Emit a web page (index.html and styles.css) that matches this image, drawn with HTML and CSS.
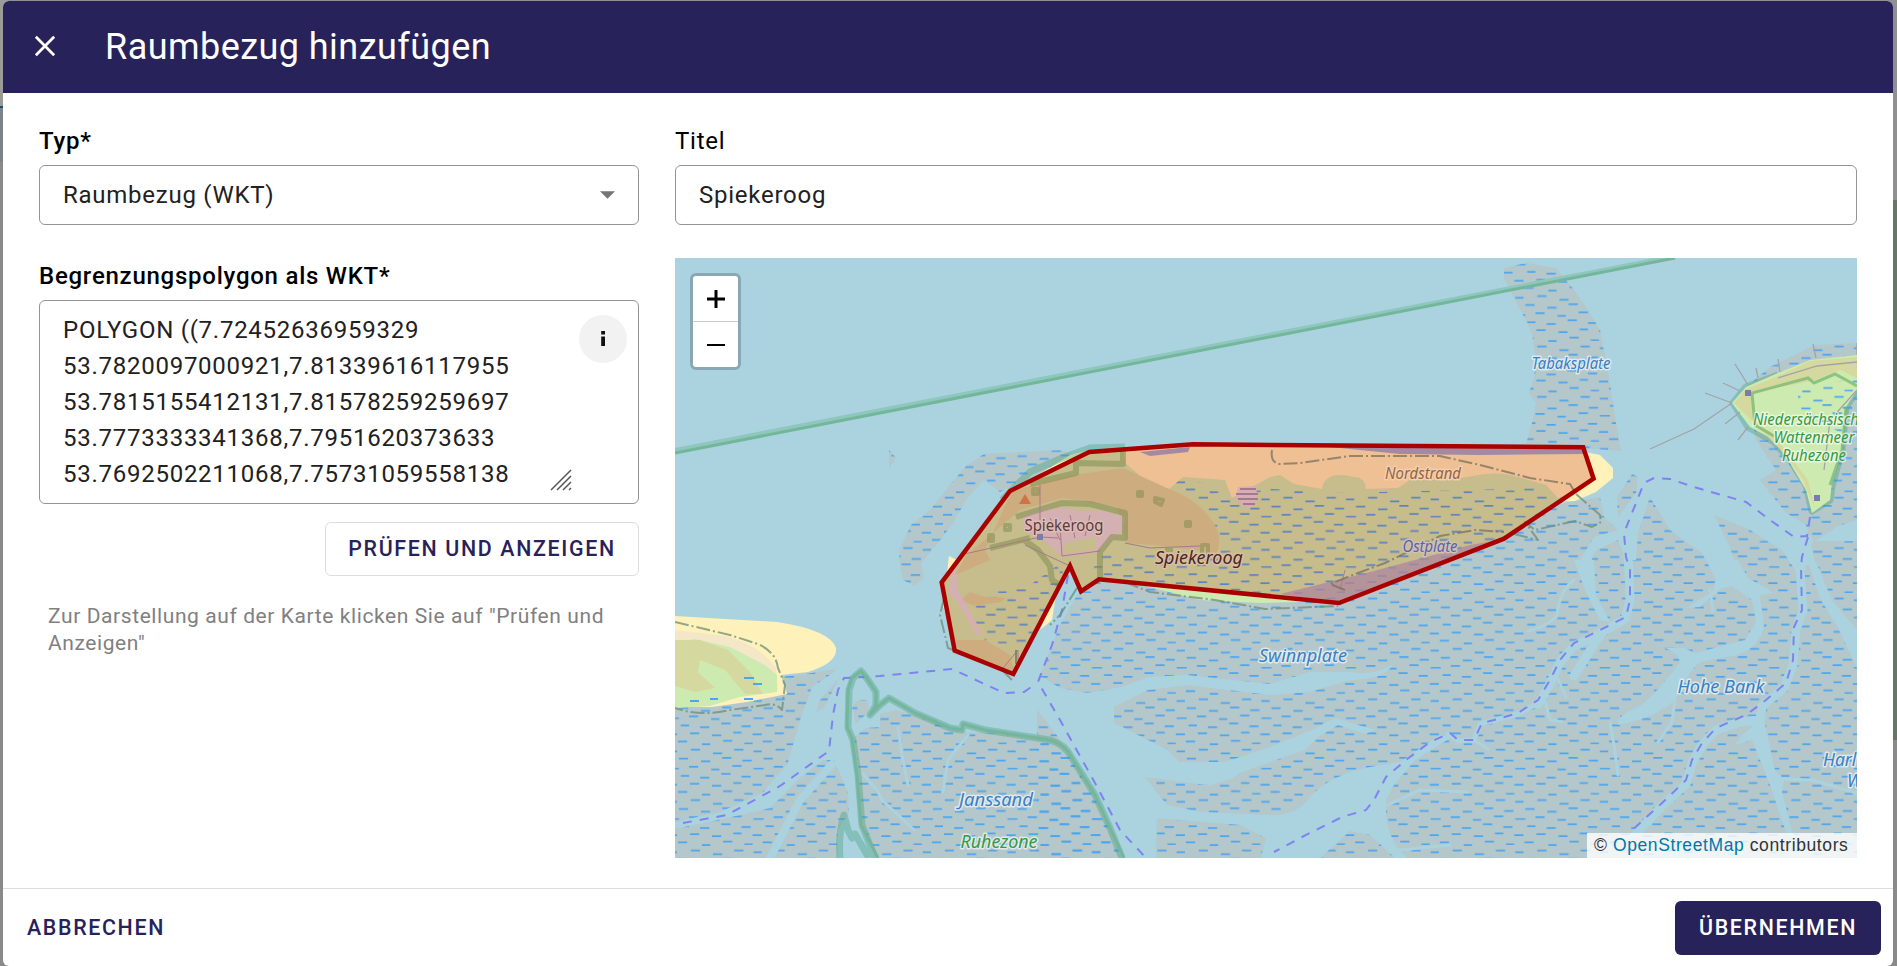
FILE: index.html
```html
<!DOCTYPE html>
<html lang="de">
<head>
<meta charset="utf-8">
<title>Raumbezug hinzufügen</title>
<link rel="stylesheet" href="styles.css">
</head>
<body>
<div class="backdrop left-edge"></div>
<div class="backdrop right-edge"></div>
<div class="dialog">
  <header class="dialog-header">
    <svg class="close" viewBox="0 0 24 24"><path d="M2 2L22 22M22 2L2 22"/></svg>
    <h1 class="dialog-title">Raumbezug hinzufügen</h1>
  </header>
  <main class="content">
    <section class="left">
      <div class="label strong">Typ*</div>
      <div class="field select"><span>Raumbezug (WKT)</span><svg class="arrow" viewBox="0 0 16 8"><path d="M0 0H16L8 8Z"/></svg></div>
      <div class="label strong second">Begrenzungspolygon als WKT*</div>
      <div class="field area">
        <div class="wkt">POLYGON ((7.72452636959329<br>53.7820097000921,7.81339616117955<br>53.7815155412131,7.81578259259697<br>53.7773333341368,7.7951620373633<br>53.7692502211068,7.75731059558138</div>
        <div class="side">
          <svg class="info" viewBox="0 0 48 48"><circle cx="24" cy="24" r="24"/><path d="M22.2 16h3.8v3.6h-3.8zM22.2 21.6h3.8v9.4h-3.8z"/></svg>
        </div>
        <svg class="grip" viewBox="0 0 22 22"><path d="M1 21L21 1M7 21L21 7M13 21L21 13M19 21L21 19"/></svg>
      </div>
      <button class="check">PRÜFEN UND ANZEIGEN</button>
      <p class="hint">Zur Darstellung auf der Karte klicken Sie auf "Prüfen und Anzeigen"</p>
    </section>
    <section class="right">
      <div class="label plain">Titel</div>
      <div class="field">Spiekeroog</div>
      <div class="map">
        <svg class="map-canvas" viewBox="675 258 1182 600">
          <defs>
            <pattern id="dash" width="92" height="56" patternUnits="userSpaceOnUse" patternTransform="scale(.92 .9)">
              <path class="reeds" d="M2 3h10M26 6h10M49 2h10M71 5h10M13 12h10M37 15h9M60 11h10M83 14h9M0 14h2M4 22h9M25 24h10M48 20h10M70 23h10M14 31h10M38 33h10M61 30h9M82 32h10M1 40h10M27 43h9M50 39h10M73 42h9M15 49h10M39 53h10M62 49h10M83 51h9"/>
            </pattern>
            <clipPath id="isl"><path d="M1010 491L1089 452L1193 444L1583 447L1594 479L1504 539L1339 603L1099 579L1081 591L1070 566L1013 674L955 651L942 582Z"/></clipPath>
            <g id="flats">
              <path d="M1504 268L1526 263L1556 268L1574 290L1590 313L1600 330L1605 357L1610 383L1615 417L1621 451L1526 444L1532 423L1536 403L1529 393L1534 377L1536 360L1532 333L1522 313L1510 290L1504 278Z"/>
              <path d="M984 454L1060 450L1080 456L1026 480L1000 492L984 480L968 497L953 523L938 543L921 563L924 577L915 586L903 580L899 560L900 548L911 525L930 510L950 485L966 466Z"/>
              <path d="M889 450L896 458L889 468Z"/>
              <path d="M675 704L780 677L806 674L840 668L812 687L800 720L785 773L762 793L720 812L675 822Z"/>
              <path d="M675 829L727 818L770 808L800 778L823 760L834 760L848 793L849 813L838 830L838 858H675Z"/>
              <path d="M832 675L842 672L824 708L815 713L816 700Z"/>
              <path d="M852 707Q858 697 868 701L869 711L856 724Z"/>
              <path d="M854 737L866 728L880 727L880 714L896 710L915 715L961 732L1003 733L1053 740L1068 753L1091 787L1106 820L1122 858H880L861 827L859 773Z"/>
              <path d="M1080 590L1099 579L1339 603L1504 539L1556 505L1600 497L1604 517L1618 530L1594 537L1580 560L1585 575L1596 550L1618 540L1626 560L1636 560L1638 533L1650 497L1670 530L1702 553L1714 572L1738 572L1730 547L1714 515L1750 530L1782 550L1795 570L1815 562L1857 562V858H1037V683L1060 625Z"/>
              <path d="M1632 474L1638 477L1636 493L1618 517L1617 497Z"/>
              <path d="M1746 387L1770 367L1815 345L1857 343V520L1838 526L1815 541H1857V562H1815L1806 525L1786 513L1760 480L1776 470L1756 440Z"/>
            </g>
          </defs>
          <rect class="water" x="675" y="258" width="1182" height="600"/>
          <use class="flat" href="#flats"/>
          <use class="reedfill" href="#flats"/>
          <!-- tidal channels -->
          <path class="water" d="M1030 675L1044 678L1060 688L1087 693L1122 687L1148 677L1187 675L1270 684L1310 672L1350 672Q1375 676 1393 664Q1385 680 1350 680L1310 692L1270 695L1187 685L1148 690L1114 707V723L1168 750L1179 762H1225L1270 747L1314 729L1335 718L1375 730L1365 734L1338 725L1318 737L1305 750L1270 762L1240 773L1225 780L1206 785L1145 777L1167 805L1200 812L1270 815Q1296 816 1310 797Q1330 775 1370 767L1400 762L1440 735L1452 737L1415 760L1394 785L1386 800L1386 815Q1390 845 1408 858H1395L1370 835L1350 831L1320 858H1261L1266 838L1240 825L1157 818L1156 858H1122L1091 787L1068 750L1030 700Z"/>
          <path class="water" d="M1225 770L1245 770L1233 778L1206 787Z"/>
          <path class="water" d="M1706 560L1738 560L1748 578L1774 593L1760 595L1764 625Q1762 645 1738 655L1700 662Q1688 672 1675 700Q1655 718 1618 725Q1615 716 1640 706Q1660 690 1680 662Q1678 652 1665 648L1684 648L1695 653L1745 640L1756 622L1752 600L1732 586L1722 588L1700 607L1686 608L1712 592L1716 580Z"/>
          <path class="water" d="M1574 560H1594L1596 595L1610 622L1600 620L1585 590Z"/>
          <path class="water" d="M1808 562H1816L1832 600L1857 630V668L1838 628L1820 598Z"/>
          <path class="water" d="M1758 722L1764 720L1775 770L1784 780L1782 792L1792 832L1808 858L1786 832L1770 785L1752 740L1735 745L1742 735Z"/>
          <g class="creek">
            <path stroke-width="9" d="M1650 484L1640 500L1626 535L1629 570L1630 600L1625 619L1606 630L1574 646L1560 662L1550 684L1538 704"/>
            <path stroke-width="5" d="M1540 702L1518 714L1480 724L1474 740L1458 741L1448 734"/>
            <path stroke-width="9" d="M1600 635L1574 676M1808 540L1800 570L1803 610L1796 630L1793 665L1784 688L1762 706L1760 720L1740 722L1716 730L1702 745L1692 763L1686 784L1662 806L1634 836"/>
            <path stroke-width="3" d="M1574 580Q1560 590 1557 615Q1550 625 1528 631M1545 700L1550 720L1562 722M1556 675L1566 697M1610 722L1614 745L1618 775M1675 700L1672 722L1658 742M1388 805L1420 790L1468 792M1400 850L1450 845M1780 779L1812 780L1857 793M898 728L902 755L908 785M968 735L948 760L943 792M862 773L877 790L882 800L914 830M1710 590L1713 612M1474 740L1488 749"/>
            <path stroke-width="8" d="M832 764L800 800L770 858M842 668L815 700L805 750L770 790"/>
          </g>
          <!-- shipping routes -->
          <g class="route">
            <path d="M683 823L727 815L780 786L829 751L833 715L838 690L844 678L880 676L952 669L1004 693L1024 692L1037 683"/>
            <path d="M1068 575L1062 610L1052 645L1038 682L1060 720L1095 783L1120 830L1146 858"/>
            <path d="M1810 517L1807 536L1794 537L1770 520L1746 502L1694 487L1670 479L1654 478L1644 483L1636 503L1624 533L1626 557L1630 570V600L1626 617L1606 627L1574 643L1560 660L1550 680L1538 700L1518 713L1494 720L1482 723L1474 740L1458 740L1450 733L1430 742L1406 760L1386 777L1374 800L1366 810L1342 817L1302 837L1274 852"/>
            <path d="M1808 537L1802 557L1801 567L1802 610L1794 627L1793 660L1786 683L1766 700L1746 715L1716 728L1702 743L1692 760L1686 780L1662 803L1630 832"/>
          </g>
          <!-- national park boundary -->
          <path class="park-soft" d="M675 450L1670 257"/><path class="park-line" d="M675 453L1675 258"/>
          <path class="park-band" d="M875 858L862 825L858 775L853 740L848 728L849 690L853 678L861 671L868 680L876 692L876 705L870 715L880 705L889 698L915 713L950 728L962 730L963 724L985 730L1050 740Q1065 744 1072 758L1095 795L1110 828L1122 858M840 858Q838 835 844 815L848 830L852 838L855 834L869 858"/>
          <path class="park-core" d="M878 858L861 825L857 775L852 738L847 727L848 690L852 678L861 671L868 680L876 692L876 705L870 715L880 705L889 698L915 713L950 728L962 730L963 724L985 730L1050 740Q1065 744 1072 758L1095 795L1110 828L1124 858"/>
          <!-- western island -->
          <path class="sand" d="M675 616L777 622Q830 630 836 648Q838 663 808 672L781 675L786 690L787 694L747 702L712 707H675Z"/>
          <path class="beach" d="M675 630L725 636Q760 645 776 668L778 690L675 700Z"/>
          <path class="grass" d="M675 642L695 639L730 647L765 665L777 675V692L740 697L710 706L675 708Z"/>
          <path class="scrub" d="M675 640L700 640L728 650L750 672L763 694H745L725 670L700 660L698 672L715 688L695 692L675 686Z"/>
          <path class="bound" d="M675 622L730 635L758 644Q776 652 778 668L785 685L782 710Q775 702 765 705L730 710Q700 717 675 708"/>
          <path class="reedlines" d="M744 678h10M753 684h9M690 701h9M710 699h8M744 699h9"/>
          <!-- eastern island -->
          <path class="park-band" d="M1857 390L1846 407L1842 450L1832 486L1830 500L1812 511L1806 485L1790 460L1774 442L1748 427L1733 403L1746 387L1778 375"/>
          <path class="grass" d="M1732 403L1746 387L1778 373L1810 360L1857 355V390L1846 407L1842 450L1832 483L1830 500L1812 513L1806 490L1790 463L1774 440L1750 427Z"/>
          <path class="scrub" d="M1734 403L1746 389L1778 376L1810 361L1857 357V378L1840 370L1815 380L1752 393L1754 420L1775 436L1808 480L1815 508L1803 480L1786 455Z"/>
          <path class="reedfill" d="M1798 388L1857 378V400L1846 435L1798 412Z"/>
          <path class="park-line thin" d="M1857 386L1835 374L1814 383L1808 378L1752 393L1755 425L1774 436M1846 407L1842 450L1830 485"/>
          <g class="groyne"><path d="M1732 403L1705 393M1732 403L1694 429L1650 449M1748 385L1735 364M1740 391L1723 383M1758 378L1756 368M1780 372L1778 359M1816 358L1813 344M1740 412L1725 424M1748 427L1738 440M1857 343V355M1778 378L1817 366L1857 362M1857 390L1830 420L1824 470"/></g>
          <rect class="spot" x="1745" y="390" width="6" height="6"/><rect class="spot" x="1814" y="495" width="6" height="6"/>
          <!-- Spiekeroog -->
          <path class="sand" d="M1570 449L1600 455L1613 468V478L1596 492L1575 501L1550 502Z"/>
          <path class="sand" d="M1030 480L1070 455L1089 450V456ZM949 556L957 560L946 580ZM942 598L946 615L943 606ZM1050 604L1056 595L1052 620L1040 630Z"/>
          <path class="park-band" d="M1002 500L1030 472L1062 458L1090 448L1125 447"/>
          <path class="grass" d="M1118 579L1200 585L1339 601L1260 603L1200 600Z"/>
          <g clip-path="url(#isl)">
            <rect class="grass" x="940" y="440" width="660" height="240"/>
            <path class="reedfill" d="M1168 478L1225 486L1320 492L1380 492L1540 488L1560 500L1504 540L1339 603L1190 588L1120 578L1120 556L1222 548ZM970 595L1030 585L1065 560L1050 640L990 650L975 620ZM1100 548L1130 556L1130 580H1090Z"/>
            <path class="sand" d="M1123 440H1600L1594 485L1558 498L1546 485L1518 477Q1500 471 1478 475L1450 480L1410 480L1398 488L1366 489Q1365 477 1354 477Q1325 470 1322 489L1294 484L1280 475L1270 477L1232 498L1225 480L1183 477L1168 490L1145 480L1125 463Z"/>
            <path class="scrub" d="M1012 491L1073 475L1123 468L1167 488Q1200 500 1215 525Q1222 540 1217 553L1153 545L1127 543L1117 507L1063 498L1020 510L967 555L955 575L990 560L985 550ZM960 600L975 606L1000 602L1006 598L985 597L970 592ZM952 640L985 640L1010 655L1015 674L970 662Z"/>
            <path class="tidal" d="M1140 452L1190 447L1188 452L1150 456ZM1320 446L1583 449V454L1480 455L1400 454Z"/>
            <path class="tidal faint" d="M1280 594L1325 583L1370 572L1430 556L1470 545L1504 539L1339 603Z"/>
            <path class="town" d="M1023 517L1040 509L1063 508L1080 511L1100 510L1125 517L1122 533L1110 540L1097 553L1063 557L1047 543L1023 530ZM955 560L958 590L982 635L977 635L956 600L948 592ZM1238 487L1256 486L1258 500L1248 510L1236 500Z"/>
            <path class="grass" d="M1063 543L1096 537V550L1063 554Z"/>
            <path class="woods" d="M1016 517L1045 508L1062 503L1090 504L1125 513V538L1112 537L1100 552V580M1024 540L1038 550L1050 566L1052 580L1064 588M990 548L1030 538M1123 445V464L1076 463V473L1030 484"/>
            <path class="woods copse" d="M1033 489h5v5h-5zM1005 525h5v5h-5zM989 535h4v6h-4zM1138 492h4v4h-4zM1155 498l8 2l-2 5l-6 -3zM1186 522h4v4h-4zM1202 545h6v16h-6zM1165 550h8"/>
            <path class="path" d="M960 555L1040 537L1058 538M1040 485V520M1125 543L1150 548L1200 546M1060 525L1062 556L1100 551M1025 545L1070 566M1050 518L1060 540M1070 515L1075 538M1090 515L1085 536M1003 668L1018 650V674M1340 590L1345 570"/>
            <path class="bound" d="M1272 450Q1270 463 1280 464L1300 463L1350 456L1440 456L1480 465L1530 478L1570 484L1576 494M1345 590L1330 584L1350 576L1385 563L1440 536L1475 530L1504 532M1016 664L1016 650"/>
            <path class="stripes" d="M1240 489h16M1236 494h22M1238 499h20M1243 504h12"/>
          </g>
          <path class="bound" d="M1576 494L1600 515L1601 522L1592 527L1575 521L1535 530L1525 522L1538 540L1510 533M1125 582L1150 592L1215 600L1265 609L1338 606M944 598L940 615L948 648L1000 668L1012 680M1077 588L1060 615L1050 625"/>
          <path class="area" d="M1010 491L1089.300 452L1193 444.300L1583.200 447.300L1593.600 478.700L1504 538.700L1339 603L1099 579.300L1081 591.300L1070 566L1013.300 674L954.700 650.700L941.700 582.300Z"/>
          <path class="peak" d="M1025 494L1031 504H1019Z"/>
          <rect class="spot" x="1037" y="534" width="6" height="6"/>
          <g class="names" text-anchor="middle">
            <text class="village" x="1064" y="531" textLength="79" lengthAdjust="spacingAndGlyphs">Spiekeroog</text>
            <text class="island" x="1199" y="564" textLength="88" lengthAdjust="spacingAndGlyphs">Spiekeroog</text>
            <text class="strand" x="1423" y="479" textLength="76" lengthAdjust="spacingAndGlyphs">Nordstrand</text>
            <text class="plate dim" x="1430" y="552" textLength="55" lengthAdjust="spacingAndGlyphs">Ostplate</text>
            <text class="plate" x="1571" y="369" textLength="79" lengthAdjust="spacingAndGlyphs">Tabaksplate</text>
            <text class="plate big" x="1303" y="662" textLength="88" lengthAdjust="spacingAndGlyphs">Swinnplate</text>
            <text class="plate big" x="1721" y="693" textLength="87" lengthAdjust="spacingAndGlyphs">Hohe Bank</text>
            <text class="plate big" x="996" y="806" textLength="74" lengthAdjust="spacingAndGlyphs">Janssand</text>
            <text class="reserve big" x="999" y="848" textLength="77" lengthAdjust="spacingAndGlyphs">Ruhezone</text>
            <text class="reserve" x="1753" y="425" text-anchor="start" textLength="106" lengthAdjust="spacingAndGlyphs">Niedersächsisch</text>
            <text class="reserve" x="1814" y="443" textLength="81" lengthAdjust="spacingAndGlyphs">Wattenmeer</text>
            <text class="reserve" x="1814" y="461" textLength="64" lengthAdjust="spacingAndGlyphs">Ruhezone</text>
            <text class="plate big" x="1823" y="766" text-anchor="start">Harl</text>
            <text class="plate big" x="1847" y="787" text-anchor="start">W</text>
          </g>
        </svg>
        <div class="zoom">
          <div class="zoom-in"><svg viewBox="0 0 20 20"><path d="M1 10H19M10 1V19"/></svg></div>
          <div class="zoom-out"><svg viewBox="0 0 20 20"><path class="minus" d="M1 10H19"/></svg></div>
        </div>
        <div class="credit">© <a>OpenStreetMap</a> contributors</div>
      </div>
    </section>
  </main>
  <footer class="footer">
    <button class="cancel">ABBRECHEN</button>
    <button class="apply">ÜBERNEHMEN</button>
  </footer>
</div>
</body>
</html>
```
FILE: styles.css
```css
* { box-sizing: border-box; }
body { margin: 0; width: 1897px; height: 966px; overflow: hidden; padding: 1px 4px 0 3px; background: #8f908f; font-family: Roboto, "Liberation Sans", sans-serif; }
button { font: inherit; margin: 0; background: none; }
.backdrop { position: absolute; top: 0; height: 966px; }
.left-edge { left: 0; width: 8px; background: linear-gradient(#9b9b98 0 106px, #1d4b6c 106px 108px, #7d8489 108px 162px, #8a8a8a 162px); }
.right-edge { right: 0; width: 9px; background: linear-gradient(#8f908f 0 200px, #68766a 200px 740px, #8a8a8a 740px); }
.dialog { position: relative; height: 965px; display: flex; flex-direction: column; background: #fff; border-radius: 6px; overflow: hidden; }
.dialog-header { height: 92px; flex: none; display: flex; align-items: center; background: #28225a; color: #fff; padding-left: 31px; gap: 49px; }
.close { width: 22px; height: 22px; margin-bottom: 2px; stroke: #fff; stroke-width: 3; fill: none; }
.dialog-title { margin: 0; font-size: 36px; font-weight: 400; letter-spacing: 0.45px; }
.content { height: 795px; flex: none; display: grid; grid-template-columns: 600px 1182px; gap: 36px; padding: 31px 0 0 36px; }
.left { display: flex; flex-direction: column; }
.label { height: 41px; line-height: 34px; font-size: 24px; letter-spacing: 0.75px; color: #000; }
.strong { font-weight: 500; }
.second { margin-top: 34px; }
.field { height: 60px; border: 1px solid #949494; border-radius: 6px; padding: 0 23px; display: flex; align-items: center; font-size: 24px; letter-spacing: 0.74px; color: #212121; }
.select { justify-content: space-between; }
.arrow { width: 15px; height: 8px; fill: #757575; }
.area { height: 204px; align-items: flex-start; padding: 11px 11px 0 23px; position: relative; justify-content: space-between; }
.wkt { line-height: 36px; }
.side { padding-top: 3px; }
.info { display: block; width: 48px; height: 48px; fill: #111; }
.info circle { fill: #f2f2f2; }
.grip { position: absolute; right: 66px; bottom: 12px; width: 22px; height: 22px; stroke: #555; stroke-width: 1.5; }
.check { margin-top: 18px; align-self: flex-end; width: 314px; height: 54px; border: 1px solid #dcdcdc; border-radius: 6px; color: #28225a; font-size: 21.4px; font-weight: 500; letter-spacing: 1.65px; white-space: nowrap; padding: 0 0 1px; }
.hint { margin: 27px 0 0 9px; width: 570px; font-size: 21px; line-height: 27px; letter-spacing: 0.59px; color: #808080; }
.map { position: relative; margin-top: 33px; height: 600px; overflow: hidden; background: #aad3df; }
.map-canvas { display: block; width: 1182px; height: 600px; }
.footer { flex: 1; border-top: 1px solid #dedede; display: flex; justify-content: space-between; align-items: flex-start; padding: 12px 12px 0 24px; }
.footer button { height: 54px; border: 0; font-size: 21.4px; font-weight: 500; letter-spacing: 1.65px; padding: 0 0 1px; }
.cancel { color: #28225a; }
.footer .apply { width: 206px; background: #28225a; color: #fff; border-radius: 6px; }
.zoom { position: absolute; left: 15px; top: 15px; width: 51px; height: 97px; border: 3px solid #88a9b3; border-radius: 6px; overflow: hidden; background: #fff; }
.zoom div { height: 45px; display: flex; align-items: center; justify-content: center; }
.zoom .zoom-in { height: 46px; border-bottom: 1px solid #ccc; }
.zoom svg { width: 20px; height: 20px; stroke: #000; stroke-width: 3; }
.zoom .minus { stroke-width: 2; }
.credit { position: absolute; right: 0; bottom: 0; height: 25px; width: 270px; padding-left: 7px; background: rgba(255,255,255,.8); font: 17.5px/24px "Liberation Sans", sans-serif; letter-spacing: 0.6px; color: #333; white-space: nowrap; }
.credit a { color: #0078a8; }

.water { fill: #aad3df; }
.flat { fill: #b4c7ca; }
.reedfill { fill: url(#dash); }
.reeds, .reedlines { stroke: #4ba5f0; stroke-width: 1.9; fill: none; }
.creek { fill: none; stroke: #aad3df; stroke-linecap: round; stroke-linejoin: round; }
.route { fill: none; stroke: #7f83ef; stroke-width: 2; stroke-dasharray: 9 8; }
.park-soft { fill: none; stroke: #8fc6bd; stroke-width: 4; }
.park-line { fill: none; stroke: #73b79b; stroke-width: 3; }
.park-line.thin { stroke: #70b56f; stroke-opacity: .7; }
.park-band { fill: none; stroke: #409c72; stroke-opacity: .35; stroke-width: 7; stroke-linejoin: round; }
.park-core { fill: none; stroke: #74b69b; stroke-width: 3; stroke-linejoin: round; }
.sand { fill: #fff1ba; }
.beach { fill: #f4e7c8; }
.grass { fill: #cdebb0; }
.scrub { fill: #d6d99f; }
.tidal { fill: #a4acca; }
.tidal.faint { fill: #b0a9c5; fill-opacity: .75; }
.town { fill: #dfdcdf; }
.woods { fill: none; stroke: #69a657; stroke-opacity: .45; stroke-width: 6; stroke-linejoin: round; }
.woods.copse { stroke-width: 4; }
.path { fill: none; stroke: #a89aa8; stroke-width: 1; }
.bound { fill: none; stroke: #6f8c78; stroke-opacity: .75; stroke-width: 2; stroke-dasharray: 14 3 2 3; stroke-linejoin: round; }
.stripes { stroke: #a794b5; stroke-width: 2; }
.groyne { fill: none; stroke: #a3a4a6; stroke-width: 1.3; }
path.area { fill: #a00; fill-opacity: .2; stroke: #a00; stroke-width: 4.5; }
.peak { fill: #cf7345; }
.spot { fill: #7a7bae; }
.names { font-family: "Noto Sans", sans-serif; font-style: italic; font-size: 16px; paint-order: stroke; stroke: rgba(255,255,255,.6); stroke-width: 3px; stroke-linejoin: round; }
.names .big { font-size: 17.5px; }
.plate { fill: #3a7fc4; }
.plate.dim { fill: #5a62ad; stroke: #d0c1b5; }
.reserve { fill: #359a45; }
.names .village { fill: #5c3a3e; font-size: 16.5px; font-style: normal; stroke: #dfbdb7; }
.names .island { fill: #4a2528; font-size: 18px; stroke: #d9c0a2; }
.strand { fill: #986537; stroke: #f3cfb5; }
```
